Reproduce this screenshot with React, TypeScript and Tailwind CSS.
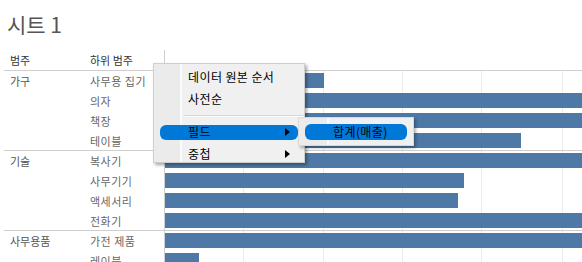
import React from 'react';

type Row = { sub: string; pct: number };
type Group = { cat: string; rows: Row[] };

const FULL = 417;

const groups: Group[] = [
  {
    cat: '가구',
    rows: [
      { sub: '사무용 집기', pct: 159 },
      { sub: '의자', pct: FULL },
      { sub: '책장', pct: FULL },
      { sub: '테이블', pct: 356 },
    ],
  },
  {
    cat: '기술',
    rows: [
      { sub: '복사기', pct: FULL },
      { sub: '사무기기', pct: 299 },
      { sub: '액세서리', pct: 293 },
      { sub: '전화기', pct: FULL },
    ],
  },
  {
    cat: '사무용품',
    rows: [
      { sub: '가전 제품', pct: FULL },
      { sub: '레이블', pct: 34 },
    ],
  },
];

const gridX = [78, 158, 237, 316, 397];

function Arrow() {
  return (
    <svg width="5" height="8" viewBox="0 0 5 8" className="shrink-0">
      <path d="M0 0 L5 4 L0 8 Z" fill="#000" />
    </svg>
  );
}

function ContextMenu() {
  return (
    <>
      <div className="absolute left-[153px] top-[63px] w-[152px] h-[100px] border border-[#cfcfcf] shadow-[2px_2px_3px_rgba(0,0,0,0.35)] bg-[linear-gradient(to_right,#ebebeb_26px,#fafafa_26px,#fafafa_28px,#f0f0f0_28px)] py-[2px] text-[12px] text-black tracking-[0.4px]">
        <div className="h-[22px] flex items-center pl-[34px]">데이터 원본 순서</div>
        <div className="h-[22px] flex items-center pl-[34px]">사전순</div>
        <div className="h-[11px] flex items-center pl-[30px]">
          <div className="w-full h-[2px] border-t border-[#d7d7d7] border-b border-b-white" />
        </div>
        <div className="h-[22px] flex items-center">
          <div className="ml-[6px] mr-[6px] flex-1 h-[15px] rounded-[6px] bg-[#0078d7] flex items-center justify-between pl-[28px] pr-[8px]">
            <span>필드</span>
            <Arrow />
          </div>
        </div>
        <div className="h-[21px] flex items-center justify-between pl-[34px] pr-[14px]">
          <span>중첩</span>
          <Arrow />
        </div>
      </div>
      <div className="absolute left-[298px] top-[117px] w-[116px] h-[29px] border border-[#d9d9d9] shadow-[2px_2px_3px_rgba(0,0,0,0.3)] bg-[linear-gradient(to_right,#ebebeb_28px,#fafafa_28px,#fafafa_30px,#f0f0f0_30px)] flex items-center text-[12px] text-black tracking-[0.4px]">
        <div className="ml-[6px] mr-[6px] flex-1 h-[16px] rounded-[6px] bg-[#0078d7] flex items-center pl-[28px]">
          합계(매출)
        </div>
      </div>
    </>
  );
}

export default function App() {
  return (
    <div className="relative w-[582px] h-[262px] overflow-hidden bg-white font-['Noto_Sans_CJK_KR','Noto_Sans',sans-serif]">
      <div className="h-[50px] pl-[7px] pt-[10px] text-[21px] leading-[28px] text-[#555]">시트 1</div>

      <div className="flex h-[21px] ml-[4px] border-b border-[#cfcfcf] text-[11px] text-[#333]">
        <div className="w-[161px] flex items-center border-r border-[#cfcfcf]">
          <span className="w-[80px] pl-[6px]">범주</span>
          <span className="pl-[6px]">하위 범주</span>
        </div>
      </div>

      <div className="relative">
        <div className="absolute inset-y-0 left-[165px] right-0">
          {gridX.map((x) => (
            <div key={x} className="absolute top-0 bottom-0 w-px bg-[#ececec]" style={{ left: x }} />
          ))}
        </div>
        {groups.map((g) => (
          <div key={g.cat} className="relative h-[80px] ml-[4px] border-b border-[#cfcfcf] flex">
            <div className="w-[80px] pl-[6px] pt-[1px] text-[11px] leading-[18px] text-[#555]">{g.cat}</div>
            <div className="w-[81px] border-r border-[#cfcfcf]">
              {g.rows.map((r) => (
                <div key={r.sub} className="h-[20px] pl-[6px] pt-[1px] text-[11px] leading-[18px] text-[#666] tracking-[0.5px]">
                  {r.sub}
                </div>
              ))}
            </div>
            <div className="flex-1">
              {g.rows.map((r) => (
                <div key={r.sub} className="h-[20px] pt-[2px]">
                  <div className="h-[15px] bg-[#4e79a7]" style={{ width: r.pct }} />
                </div>
              ))}
            </div>
          </div>
        ))}
      </div>

      <ContextMenu />
    </div>
  );
}
